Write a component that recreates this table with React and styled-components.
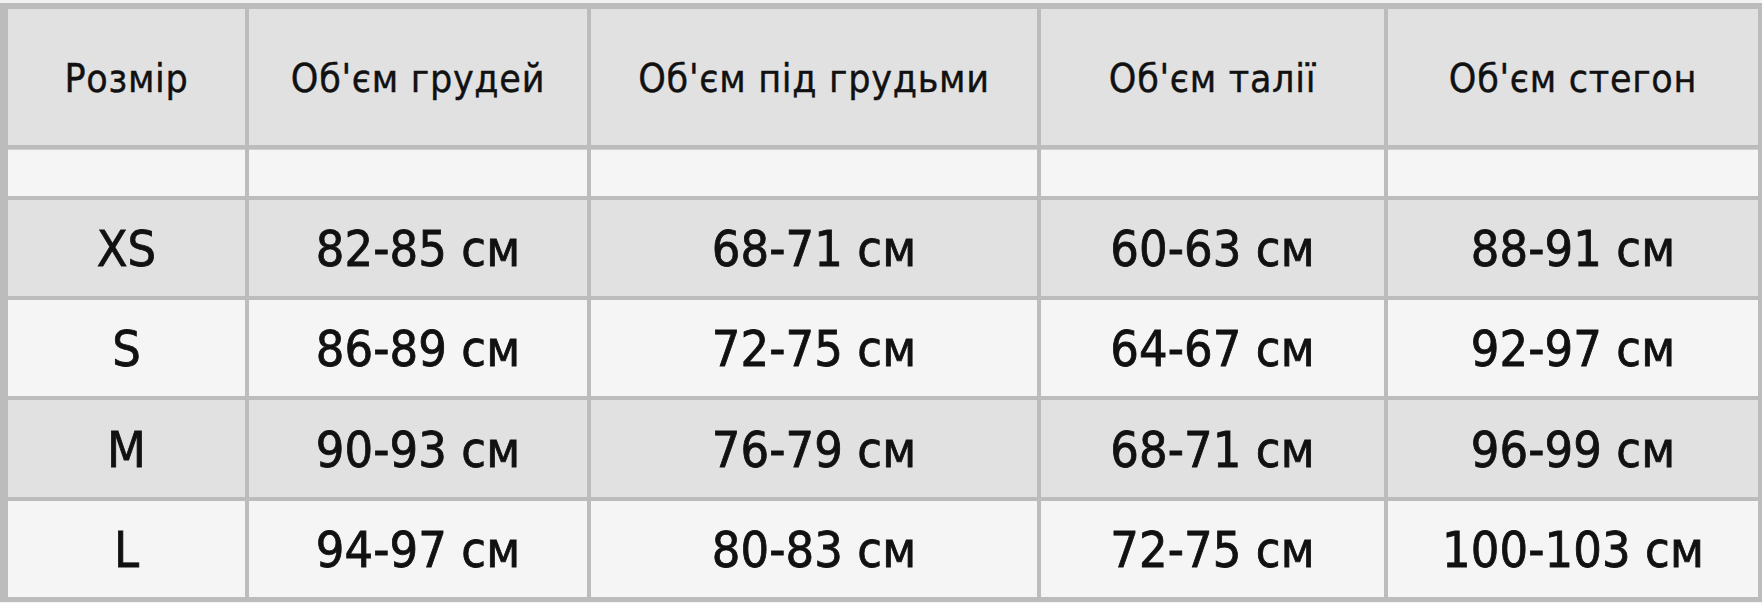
import React from 'react';
import styled, { createGlobalStyle } from 'styled-components';

//---------------------- DATA ------------------------

const headers = ['Розмір', "Об'єм грудей", "Об'єм під грудьми", "Об'єм талії", "Об'єм стегон"];

const rows = [
  ['XS', '82-85 см', '68-71 см', '60-63 см', '88-91 см'],
  ['S', '86-89 см', '72-75 см', '64-67 см', '92-97 см'],
  ['M', '90-93 см', '76-79 см', '68-71 см', '96-99 см'],
  ['L', '94-97 см', '80-83 см', '72-75 см', '100-103 см'],
];

//---------------------- APP ------------------------

const App = () => {
  return (
    <>
      <GlobalStyle />
      <Table>
        {headers.map((h) => (
          <HeadCell key={h}>{h}</HeadCell>
        ))}
        {headers.map((h) => (
          <SpacerCell key={'sp-' + h} />
        ))}
        {rows.map((row, i) =>
          row.map((value, j) => (
            <Cell key={i + '-' + j} $dark={i % 2 === 0}>
              {value}
            </Cell>
          ))
        )}
      </Table>
    </>
  );
};

//---------------------- STYLE ----------------------

const GlobalStyle = createGlobalStyle`
  html, body {
    margin: 0;
    padding: 0;
    background: #f2f2f2;
  }
  body {
    font-family: "DejaVu Sans Condensed", "DejaVu Sans", "Noto Sans", sans-serif;
    font-stretch: condensed;
    color: #111111;
  }
`;

const Table = styled.div`
  margin-top: 3px;
  display: grid;
  grid-template-columns: 237px 338px 446px 343px 370px;
  grid-template-rows: 136px 47px 96px 96px 97px 96px;
  gap: 4px;
  padding: 6px 4px 5px 8px;
  background: #bcbcbc;
`;

const HeadCell = styled.div`
  display: flex;
  align-items: center;
  justify-content: center;
  background: #e1e1e1;
  font-size: 39px;
  letter-spacing: 0.7px;
  -webkit-text-stroke: 0.4px #111111;
  padding-top: 2px;
`;

const SpacerCell = styled.div`
  background: #f5f5f5;
  box-shadow: inset 0 1px 0 #cfcfcf;
`;

const Cell = styled.div`
  display: flex;
  align-items: center;
  justify-content: center;
  background: ${(p) => (p.$dark ? '#e1e1e1' : '#f5f5f5')};
  font-size: 50px;
  letter-spacing: 0.1px;
  -webkit-text-stroke: 0.8px #111111;
  padding-top: 2px;
`;

//------------------- EXPORTS --------------------
export default App;
